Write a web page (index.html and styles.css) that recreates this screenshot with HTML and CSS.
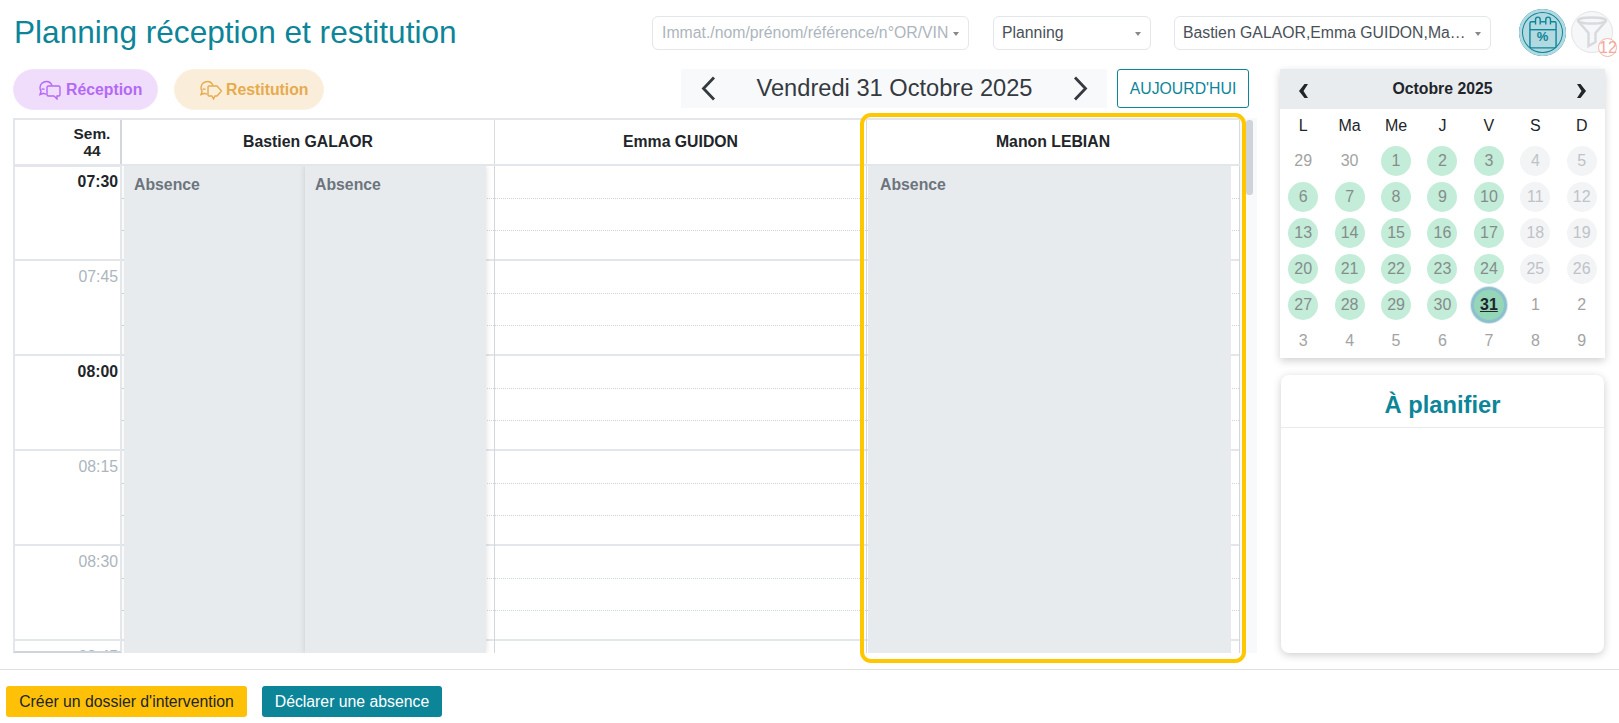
FILE: index.html
```html
<!DOCTYPE html>
<html lang="fr">
<head>
<meta charset="utf-8">
<title>Planning réception et restitution</title>
<link rel="stylesheet" href="styles.css">
</head>
<body>
<header class="topbar">
  <h1 class="title">Planning réception et restitution</h1>
  <div class="select select-search placeholder"><span class="select-text">Immat./nom/prénom/référence/n°OR/VIN</span></div>
  <div class="select select-view"><span class="select-text">Planning</span></div>
  <div class="select select-people"><span class="select-text">Bastien GALAOR,Emma GUIDON,Manon LEBIAN</span></div>
  <button class="round-btn round-active" aria-label="Taux">
    <svg class="cal-icon" width="28" height="33" viewBox="0 0 30 35" fill="none" stroke="#0d8599" stroke-width="1.500"><path d="M7 6H2.500A1.500 1.500 0 0 0 1 7.500V32.500A1.500 1.500 0 0 0 2.500 34h25a1.500 1.500 0 0 0 1.500-1.500V7.500A1.500 1.500 0 0 0 27.500 6H23"/><path d="M12 6h6"/><path d="M7 9V3.500a2.500 2.500 0 0 1 5 0V9M18 9V3.500a2.500 2.500 0 0 1 5 0V9"/><path d="M1 14.500h28"/></svg>
    <span class="percent">%</span>
  </button>
  <button class="round-btn round-filter" aria-label="Filtres">
    <svg width="32" height="32" viewBox="0 0 32 32" fill="none" stroke="#d8dadd" stroke-width="2.500"><ellipse cx="16" cy="4.500" rx="14" ry="3"/><path d="M2 5l10.500 12v13l7-4v-9L30 5"/></svg>
    <span class="filter-count">12</span>
  </button>
</header>

<main class="content">
  <section class="left">
    <div class="toolbar">
      <button class="pill pill-in">
        <svg width="23" height="20" viewBox="0 0 23 20" fill="none" stroke="currentColor" stroke-width="1.400"><path d="M14 5.500C13 3 11 1.500 8.500 1.500 5 1.500 2 4.300 2 7.800c0 1.300.4 2.500 1.100 3.500L2 14.500l3.500-1.200c.8.400 1.500.600 2.500.700"/><path d="M3.500 9.500c1-.8 2-.8 3 0"/><path d="M10.500 6h10A1.500 1.500 0 0 1 22 7.500v7a1.500 1.500 0 0 1-1.500 1.500H19v3l-3-3h-5.500A1.500 1.500 0 0 1 9 14.500v-7A1.500 1.500 0 0 1 10.500 6z"/></svg>
        Réception
      </button>
      <button class="pill pill-out">
        <svg width="23" height="20" viewBox="0 0 23 20" fill="none" stroke="currentColor" stroke-width="1.400"><path d="M14 5.500C13 3 11 1.500 8.500 1.500 5 1.500 2 4.300 2 7.800c0 1.300.4 2.500 1.100 3.500L2 14.500l3.500-1.200c.8.400 1.500.600 2.500.700"/><path d="M3.500 9.500c1-.8 2-.8 3 0"/><path d="M10 6h8l4.500 5-4.500 5h-2l-1.500 3-1.500-3H10a1 1 0 0 1-1-1V7a1 1 0 0 1 1-1z"/></svg>
        Restitution
      </button>
      <div class="date-nav">
        <svg class="chev" width="15" height="25" viewBox="0 0 15 25" fill="none" stroke="#343a40" stroke-width="2.800"><path d="M13 1.500L2.500 12.500 13 23.500"/></svg>
        <span class="date-text">Vendredi 31 Octobre 2025</span>
        <svg class="chev" width="15" height="25" viewBox="0 0 15 25" fill="none" stroke="#343a40" stroke-width="2.800"><path d="M2 1.500L12.500 12.500 2 23.500"/></svg>
      </div>
      <button class="today-btn">AUJOURD'HUI</button>
    </div>

    <div class="scheduler">
      <div class="sched-main">
        <div class="sched-head">
          <div class="week">Sem.<br>44</div>
          <div class="person">Bastien GALAOR</div>
          <div class="person">Emma GUIDON</div>
          <div class="person">Manon LEBIAN</div>
        </div>
        <div class="sched-body">
          <div class="times">
            <div class="time time-hour">07:30</div>
            <div class="time">07:45</div>
            <div class="time time-hour">08:00</div>
            <div class="time">08:15</div>
            <div class="time">08:30</div>
            <div class="time">08:45</div>
          </div>
          <div class="col">
            <div class="quarter"></div><div class="quarter"></div><div class="quarter"></div><div class="quarter"></div><div class="quarter"></div><div class="quarter"></div>
            <div class="absence absence-a">Absence</div>
            <div class="absence absence-b">Absence</div>
          </div>
          <div class="col">
            <div class="quarter"></div><div class="quarter"></div><div class="quarter"></div><div class="quarter"></div><div class="quarter"></div><div class="quarter"></div>
          </div>
          <div class="col">
            <div class="quarter"></div><div class="quarter"></div><div class="quarter"></div><div class="quarter"></div><div class="quarter"></div><div class="quarter"></div>
            <div class="absence absence-full">Absence</div>
          </div>
        </div>
      </div>
      <div class="scrolltrack"><div class="scrollthumb"></div></div>
      <div class="highlight"></div>
    </div>
  </section>

  <aside class="right">
    <div class="calendar">
      <div class="cal-head">
        <svg class="cal-arrow" width="10" height="14" viewBox="0 0 10 14" fill="#212529"><path d="M6.500 0H10L5.500 7l4.500 7H6.500L1 7z"/></svg>
        <span class="cal-title">Octobre 2025</span>
        <svg class="cal-arrow" width="10" height="14" viewBox="0 0 10 14" fill="#212529"><path d="M3.500 0H0l4.500 7L0 14h3.500L9 7z"/></svg>
      </div>
      <div class="cal-grid">
        <div class="dow">L</div><div class="dow">Ma</div><div class="dow">Me</div><div class="dow">J</div><div class="dow">V</div><div class="dow">S</div><div class="dow">D</div>
        <div class="day other">29</div><div class="day other">30</div><div class="day open">1</div><div class="day open">2</div><div class="day open">3</div><div class="day off">4</div><div class="day off">5</div>
        <div class="day open">6</div><div class="day open">7</div><div class="day open">8</div><div class="day open">9</div><div class="day open">10</div><div class="day off">11</div><div class="day off">12</div>
        <div class="day open">13</div><div class="day open">14</div><div class="day open">15</div><div class="day open">16</div><div class="day open">17</div><div class="day off">18</div><div class="day off">19</div>
        <div class="day open">20</div><div class="day open">21</div><div class="day open">22</div><div class="day open">23</div><div class="day open">24</div><div class="day off">25</div><div class="day off">26</div>
        <div class="day open">27</div><div class="day open">28</div><div class="day open">29</div><div class="day open">30</div><div class="day today">31</div><div class="day other">1</div><div class="day other">2</div>
        <div class="day other">3</div><div class="day other">4</div><div class="day other">5</div><div class="day other">6</div><div class="day other">7</div><div class="day other">8</div><div class="day other">9</div>
      </div>
    </div>
    <div class="planifier">
      <h2 class="planifier-title">À planifier</h2>
    </div>
  </aside>
</main>

<footer class="footer">
  <button class="btn btn-yellow">Créer un dossier d'intervention</button>
  <button class="btn btn-teal">Déclarer une absence</button>
</footer>
</body>
</html>
```
FILE: styles.css
```css
* { box-sizing: border-box; }
html, body { margin: 0; padding: 0; }
body {
  width: 1619px;
  height: 723px;
  overflow: hidden;
  background: #fff;
  color: #212529;
  font-family: "Liberation Sans", Arial, sans-serif;
  font-size: 15.800px;
}
button { font-family: inherit; cursor: pointer; }

/* top bar */
.topbar {
  display: flex;
  align-items: center;
  height: 65px;
  padding: 1px 6px 0 14px;
}
.title {
  margin: 0 auto 0 0;
  font-size: 31.600px;
  font-weight: 400;
  color: #0d8599;
  line-height: 1.2;
}
.select {
  position: relative;
  display: flex;
  align-items: center;
  height: 34px;
  padding: 0 20px 0 8px;
  border: 1px solid #e3e6ea;
  border-radius: 6px;
  background: #fff;
  color: #495057;
  font-size: 15.800px;
}
.select::after {
  content: "";
  position: absolute;
  right: 9px;
  top: 15px;
  border-left: 3.500px solid transparent;
  border-right: 3.500px solid transparent;
  border-top: 4px solid #888;
}
.select-text { overflow: hidden; white-space: nowrap; text-overflow: ellipsis; }
.placeholder { color: #adb5bd; }
.select-search { width: 317px; margin-right: 24px; padding-left: 9px; padding-right: 18px; }
.select-view { width: 158px; margin-right: 23px; }
.select-people { width: 317px; margin-right: 28px; }
.round-btn {
  position: relative;
  display: flex;
  align-items: center;
  justify-content: center;
  margin-bottom: 2px;
  padding: 0;
  border: 0;
  border-radius: 50%;
}
.round-active {
  width: 47px;
  height: 47px;
  background: #b3d9e0;
  box-shadow: inset 0 0 0 3px #b3d9e0, inset 0 0 0 4px #0d8599;
}
.cal-icon { margin-top: 1px; }
.percent {
  position: absolute;
  top: 20px;
  left: 0;
  right: 0;
  text-align: center;
  font-size: 13px;
  font-weight: 700;
  color: #0d8599;
}
.round-filter {
  width: 42px;
  height: 42px;
  margin-left: 5px;
  border: 1px solid #e2e4e8;
  background: #f6f7f8;
}
.filter-count {
  position: absolute;
  right: -5px;
  bottom: -5px;
  width: 19px;
  height: 19px;
  border: 1px solid #f3b6ab;
  border-radius: 50%;
  background: #fff;
  color: #f3a99b;
  font-size: 16px;
  line-height: 17px;
  text-align: center;
}

/* main */
.content {
  display: flex;
  height: 604px;
}
.left {
  width: 1244px;
  margin-left: 13px;
}
.toolbar {
  display: flex;
  align-items: flex-start;
  height: 53px;
  padding: 4px 8px 0 0;
}
.pill {
  display: flex;
  align-items: center;
  gap: 5px;
  height: 41px;
  padding: 0 0 0 24px;
  border-radius: 21px;
  font-size: 15.800px;
  font-weight: 700;
}
.pill-in {
  width: 145px;
  margin-right: 16px;
  color: #b469f5;
  background: #f0ddfc;
  border: 1px solid #f2e3fd;
}
.pill-out {
  width: 150px;
  gap: 4px;
  color: #e6ab4e;
  background: #faeeda;
  border: 1px solid #fbf1e1;
}
.date-nav {
  display: flex;
  align-items: center;
  justify-content: space-between;
  width: 426px;
  height: 39px;
  margin-left: auto;
  padding: 0 19px 0 20px;
  background: #f8f9fa;
}
.date-text { font-size: 23.650px; color: #343a40; }
.today-btn {
  width: 132px;
  height: 39px;
  margin-left: 10px;
  padding: 0;
  border: 1px solid #0d8599;
  border-radius: 3px;
  background: #fff;
  color: #0d8599;
  font-size: 15.800px;
}

/* scheduler */
.scheduler {
  position: relative;
  display: flex;
  height: 535px;
}
.sched-main { flex: 1; min-width: 0; }
.sched-head, .sched-body {
  display: grid;
  grid-template-columns: 109px 373px 372px 373px;
}
.sched-head {
  height: 48px;
  border-top: 2px solid #e3e6ea;
  border-bottom: 2px solid #e3e6ea;
}
.week {
  display: flex;
  align-items: center;
  justify-content: center;
  padding-left: 49px;
  border-left: 2px solid #e3e6ea;
  border-right: 2px solid #d3d6dc;
  font-weight: 700;
  font-size: 15.400px;
  line-height: 17px;
  text-align: center;
}
.person {
  display: flex;
  align-items: center;
  justify-content: center;
  border-right: 1px solid #d8dbe0;
  font-weight: 700;
  font-size: 15.800px;
}
.sched-body {
  height: 487px;
  overflow: hidden;
}
.times {
  height: 487px;
  overflow: hidden;
  border-top: 1px solid #e3e6ea;
  border-left: 2px solid #e3e6ea;
  border-right: 2px solid #e3e6ea;
  border-bottom: 2px solid #ced4da;
}
.time {
  height: 95px;
  padding: 7px 2px 0 0;
  border-bottom: 2px solid #e3e6ea;
  text-align: right;
  color: #adb5bd;
  font-size: 15.800px;
}
.time:first-child { height: 94px; padding-top: 6px; }
.time-hour { color: #212529; font-weight: 700; }
.col {
  position: relative;
  border-right: 1px solid #d3d6da;
  overflow: hidden;
}
.quarter {
  display: flex;
  flex-direction: column;
  height: 95px;
  border-bottom: 2px solid #e3e6ea;
}
.quarter::before, .quarter::after {
  content: "";
  display: block;
  height: 31.500px;
  border-bottom: 1px dotted #ced4da;
}
.absence {
  position: absolute;
  top: 0;
  bottom: 0;
  padding: 10px 12px;
  background: #e8ebee;
  color: #6c757d;
  font-weight: 700;
  font-size: 15.800px;
}
.absence-a { left: 2px; width: 181px; padding-left: 10px; box-shadow: 2px 0 6px rgba(0, 0, 0, .12); }
.absence-b { left: 183px; width: 181px; padding-left: 10px; box-shadow: 0 0 6px rgba(0, 0, 0, .14); }
.absence-full { left: 1px; right: 8px; }
.scrolltrack {
  width: 17px;
  padding: 2px 4px 0 6px;
  background: #f8f9fa;
}
.scrollthumb {
  height: 75px;
  border-radius: 3px;
  background: #ced4da;
}
.highlight {
  position: absolute;
  left: 847px;
  top: -5px;
  width: 386px;
  height: 550px;
  border: 4px solid #ffc700;
  border-radius: 11px;
  pointer-events: none;
}

/* right column */
.right {
  display: flex;
  flex-direction: column;
  gap: 17px;
  width: 325px;
  margin-left: 23px;
  padding-top: 4px;
}
.calendar {
  height: 289px;
  background: #fff;
  box-shadow: 0 3px 8px rgba(0, 0, 0, .18);
}
.cal-head {
  display: flex;
  align-items: center;
  justify-content: space-between;
  height: 40px;
  padding: 0 18px;
  background: #e9ecef;
}
.cal-arrow { margin-top: 4px; }
.cal-title { font-weight: 700; font-size: 15.800px; }
.cal-grid {
  display: grid;
  grid-template-columns: repeat(7, 1fr);
  grid-template-rows: 34px repeat(6, 36px);
}
.dow, .day {
  display: flex;
  align-items: center;
  justify-content: center;
  font-size: 16px;
}
.dow { color: #212529; }
.day {
  width: 30px;
  height: 30px;
  margin: 3px auto;
  border-radius: 50%;
}
.other { color: #a3a3a3; }
.open { background: #c3ecd9; color: #858d8b; }
.off { background: #f3f4f6; color: #bfc2c6; }
.today {
  background: #96d6b8;
  color: #212529;
  font-weight: 700;
  text-decoration: underline;
  box-shadow: 0 0 0 3px #8cc0cc, 0 0 0 4px #d5e7eb;
}
.planifier {
  height: 278px;
  margin: 0 1px;
  border-radius: 8px;
  background: #fff;
  box-shadow: 0 2px 8px rgba(0, 0, 0, .2);
}
.planifier-title {
  height: 53px;
  margin: 0;
  border-bottom: 1px solid #e9ecef;
  color: #0d8599;
  font-size: 23.700px;
  font-weight: 700;
  line-height: 60px;
  text-align: center;
}

/* footer */
.footer {
  display: flex;
  gap: 15px;
  height: 54px;
  padding: 16px 6px 0;
  border-top: 1px solid #e0e0e0;
}
.btn {
  height: 31px;
  padding: 0;
  border: 0;
  border-radius: 3px;
  font-size: 15.800px;
}
.btn-yellow { width: 241px; background: #ffc107; color: #212529; }
.btn-teal { width: 180px; background: #0d8599; color: #fff; }
```
